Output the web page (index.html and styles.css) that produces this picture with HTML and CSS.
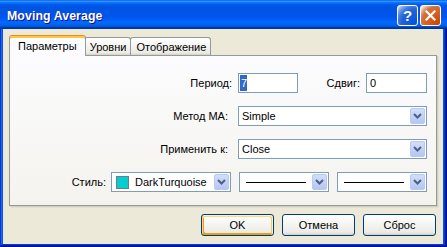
FILE: index.html
```html
<!DOCTYPE html>
<html lang="ru">
<head>
    <meta charset="UTF-8">
    <title>Moving Average</title>
    <link rel="stylesheet" href="styles.css">
</head>
<body>
    <div class="window">
        <div class="titlebar">
            <span class="title">Moving Average</span>
            <div class="caption-buttons">
                <span class="cap-btn help">?</span>
                <span class="cap-btn close">
                    <svg width="11" height="11" viewBox="0 0 11 11"><path d="M1.5 1.5 L9.5 9.5 M9.5 1.5 L1.5 9.5" stroke="#fff" stroke-width="2.2" stroke-linecap="square"/></svg>
                </span>
            </div>
        </div>
        <div class="client">
            <div class="tabs">
                <div class="tab active">Параметры</div>
                <div class="tab">Уровни</div>
                <div class="tab">Отображение</div>
            </div>
            <div class="panel">
                <div class="row">
                    <label class="label short">Период:</label>
                    <div class="edit period"><span class="selected">7</span></div>
                    <label class="label short shift-label">Сдвиг:</label>
                    <div class="edit shift">0</div>
                </div>
                <div class="row">
                    <label class="label">Метод МА:</label>
                    <div class="combo wide">
                        <span class="combo-text">Simple</span>
                        <span class="arrow"><svg width="9" height="6" viewBox="0 0 9 6"><path d="M1 1 L4.5 4.5 L8 1" fill="none" stroke="#4d6185" stroke-width="2"/></svg></span>
                    </div>
                </div>
                <div class="row">
                    <label class="label">Применить к:</label>
                    <div class="combo wide">
                        <span class="combo-text">Close</span>
                        <span class="arrow"><svg width="9" height="6" viewBox="0 0 9 6"><path d="M1 1 L4.5 4.5 L8 1" fill="none" stroke="#4d6185" stroke-width="2"/></svg></span>
                    </div>
                </div>
                <div class="row">
                    <label class="label style-label">Стиль:</label>
                    <div class="combo color">
                        <span class="swatch"></span>
                        <span class="combo-text">DarkTurquoise</span>
                        <span class="arrow"><svg width="9" height="6" viewBox="0 0 9 6"><path d="M1 1 L4.5 4.5 L8 1" fill="none" stroke="#4d6185" stroke-width="2"/></svg></span>
                    </div>
                    <div class="combo line">
                        <span class="line-sample"></span>
                        <span class="arrow"><svg width="9" height="6" viewBox="0 0 9 6"><path d="M1 1 L4.5 4.5 L8 1" fill="none" stroke="#4d6185" stroke-width="2"/></svg></span>
                    </div>
                    <div class="combo line">
                        <span class="line-sample"></span>
                        <span class="arrow"><svg width="9" height="6" viewBox="0 0 9 6"><path d="M1 1 L4.5 4.5 L8 1" fill="none" stroke="#4d6185" stroke-width="2"/></svg></span>
                    </div>
                </div>
            </div>
            <div class="buttons">
                <button class="btn default">OK</button>
                <button class="btn">Отмена</button>
                <button class="btn">Сброс</button>
            </div>
        </div>
    </div>
</body>
</html>
```

FILE: styles.css
```css
body {
    margin: 0;
    padding: 0;
    font-family: 'Liberation Sans', Arial, sans-serif;
    font-size: 11px;
    color: #000;
    background: #fff;
    overflow: hidden;
}
.window {
    width: 447px;
    height: 247px;
    display: flex;
    flex-direction: column;
    background: #0855dd;
    box-shadow: inset -1px -1px #00138c, inset 1px 1px #0831d9, inset -2px -2px #001ea0, inset 2px 2px #166aee, inset -3px -3px #003bda, inset 3px 3px #0855dd;
}
.titlebar {
    height: 29px;
    display: flex;
    align-items: center;
    justify-content: space-between;
    padding: 2px 6px 0 7px;
    box-sizing: border-box;
    background: linear-gradient(180deg, #0058ee 0%, #3593ff 4%, #288eff 6%, #127dff 8%, #036ffc 10%, #0262ee 14%, #0057e5 20%, #0054e3 24%, #0055eb 56%, #005bf5 66%, #026afe 76%, #0062ef 86%, #0052d6 92%, #0040ab 94%, #003092 100%);
}
.title {
    color: #fff;
    font-weight: bold;
    font-size: 12.3px;
    letter-spacing: 0.1px;
    text-shadow: 1px 1px #0f1089;
}
.caption-buttons {
    display: flex;
    gap: 2px;
    margin-top: -1px;
}
.cap-btn {
    width: 21px;
    height: 21px;
    box-sizing: border-box;
    border: 1px solid #fff;
    border-radius: 3px;
    display: flex;
    align-items: center;
    justify-content: center;
    color: #fff;
    font-weight: bold;
    font-size: 15px;
}
.help {
    background: radial-gradient(circle at 90% 90%, #0054e9 0%, #2263d5 55%, #4479e4 70%, #a3bbec 90%, #fff 100%);
}
.close {
    background: radial-gradient(circle at 90% 90%, #cc4600 0%, #dc6527 55%, #cd7546 70%, #ffccb2 90%, #fff 100%);
}
.client {
    flex: 1;
    margin: 0 4px 3px 3px;
    padding: 6px 6px 0 6px;
    background: #ece9d8;
}
.tabs {
    display: flex;
    align-items: flex-end;
    height: 20px;
}
.tab {
    height: 18px;
    box-sizing: border-box;
    padding: 0 4px 0 5px;
    display: flex;
    align-items: center;
    padding-top: 1px;
    border: 1px solid #919b9c;
    border-bottom: none;
    border-radius: 3px 3px 0 0;
    background: linear-gradient(180deg, #fff, #ecebe6 86%, #d8d2c4);
    margin-left: -1px;
}
.tab.active {
    position: relative;
    z-index: 1;
    height: 21px;
    margin: 0 -1px -1px 0;
    padding: 0 8px;
    background: #fcfcfe;
    border-top-color: #e68b2c;
    box-shadow: inset 0 2px #ffc83c;
}
.panel {
    height: 151px;
    box-sizing: border-box;
    border: 1px solid #919b9c;
    padding: 17px 9px 0 0;
    background: linear-gradient(180deg, #fcfcfe, #f4f3ee);
    box-shadow: 1px 1px #d0cebf, 2px 2px #e3e0d0;
    display: flex;
    flex-direction: column;
    gap: 13px;
}
.row {
    display: flex;
    justify-content: flex-end;
    align-items: center;
    height: 20px;
}
.label {
    margin-right: 10px;
}
.label.short {
    margin-right: 6px;
}
.shift-label {
    width: 62px;
    text-align: right;
}
.style-label {
    margin-right: 5px;
}
.edit {
    height: 20px;
    box-sizing: border-box;
    border: 1px solid #7f9db9;
    background: #fff;
    display: flex;
    align-items: center;
    padding-left: 3px;
}
.edit.period {
    width: 60px;
    padding-left: 1px;
}
.edit.shift {
    width: 61px;
}
.selected {
    background: #316ac5;
    color: #fff;
    line-height: 16px;
    padding: 0 0 0 1px;
}
.combo {
    height: 20px;
    box-sizing: border-box;
    border: 1px solid #7f9db9;
    background: #fff;
    display: flex;
    align-items: center;
    padding-left: 3px;
}
.combo.wide {
    width: 189px;
}
.combo.color {
    width: 120px;
    margin-right: 8px;
}
.combo.line {
    width: 90px;
    padding-left: 6px;
}
.combo.line + .combo.line {
    margin-left: 8px;
}
.combo-text {
    flex: 1;
}
.swatch {
    width: 13px;
    height: 13px;
    box-sizing: border-box;
    border: 1px solid #7a7a7a;
    background: #00ced1;
    margin: 0 6px 0 1px;
}
.line-sample {
    width: 60px;
    height: 1px;
    background: #000;
    margin-right: auto;
}
.arrow {
    width: 15px;
    height: 16px;
    box-sizing: border-box;
    margin-right: 1px;
    border: 1px solid #b9c9ef;
    border-radius: 2px;
    background: linear-gradient(180deg, #d2ddfa, #b4c7f3);
    display: flex;
    align-items: center;
    justify-content: center;
}
.buttons {
    display: flex;
    justify-content: flex-end;
    gap: 8px;
    margin-top: 8px;
    padding-right: 1px;
}
.btn {
    width: 73px;
    height: 22px;
    font-family: 'Liberation Sans', Arial, sans-serif;
    font-size: 11px;
    color: #000;
    border: 1px solid #003c74;
    border-radius: 3px;
    background: linear-gradient(180deg, #fff, #ecebe6 86%, #d6d0c5);
    padding: 0;
}
.btn.default {
    box-shadow: inset -1px 1px #fff0cf, inset 1px 2px #fdd889, inset -2px 2px #fbc761, inset 2px -2px #e5a01a;
}
```
